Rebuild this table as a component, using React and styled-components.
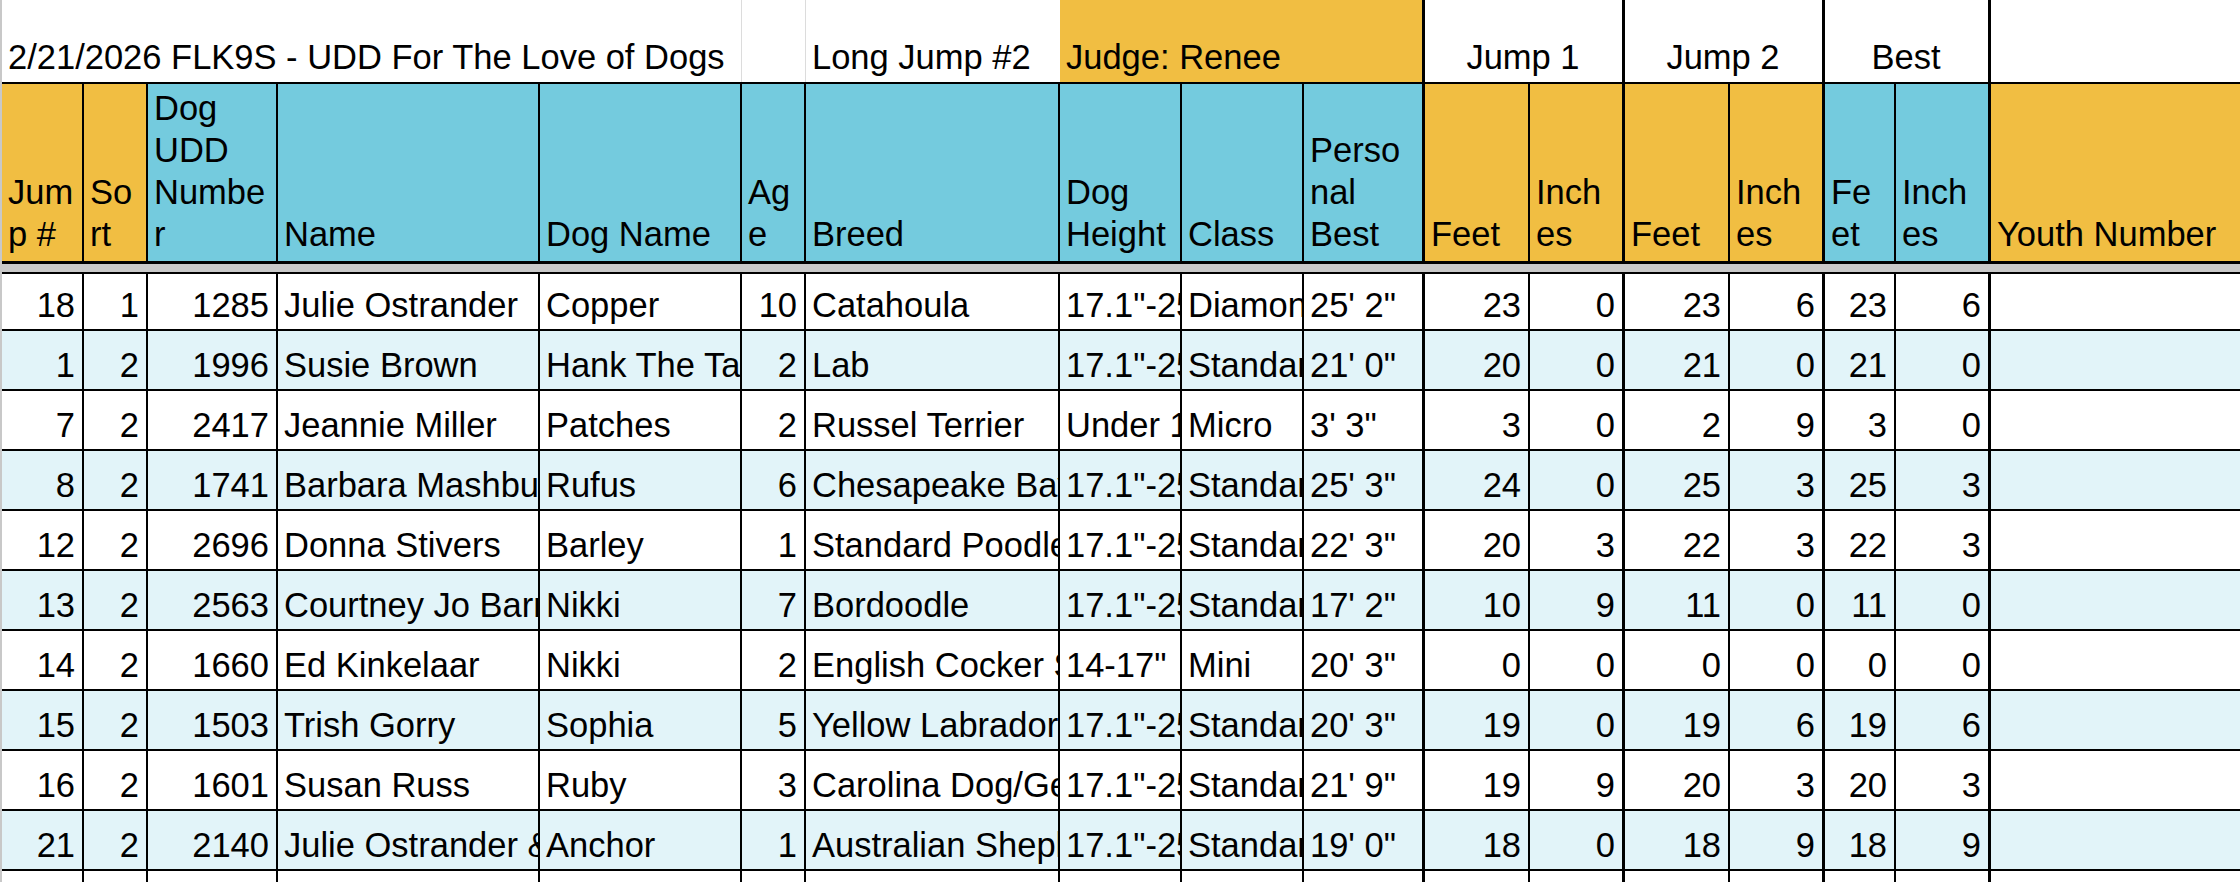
import React from "react";
import styled, { createGlobalStyle } from "styled-components";

const palette = {
  orange: "#f1be42",
  blue: "#74cbde",
  stripe: "#e2f4f9",
  white: "#ffffff",
  line: "#000000",
  faint: "#dcdcdc",
  freeze: "#c9c9c9",
};

const GlobalStyle = createGlobalStyle`
  html, body {
    margin: 0;
    padding: 0;
    background: #fff;
  }
  body {
    font-family: "Liberation Sans", Arial, sans-serif;
    overflow: hidden;
  }
`;

// column layout of the sheet, widths include the right grid line
const columns = [
  { key: "jump", label: "Jump #", w: 82, head: "orange", align: "right" },
  { key: "sort", label: "Sort", w: 64, head: "orange", align: "right" },
  { key: "udd", label: "Dog UDD Number", w: 130, head: "blue", align: "right" },
  { key: "name", label: "Name", w: 262, head: "blue" },
  { key: "dog", label: "Dog Name", w: 202, head: "blue" },
  { key: "age", label: "Age", w: 64, head: "blue", align: "right" },
  { key: "breed", label: "Breed", w: 254, head: "blue" },
  { key: "height", label: "Dog Height", w: 122, head: "blue" },
  { key: "cls", label: "Class", w: 122, head: "blue" },
  { key: "pb", label: "Personal Best", w: 121, head: "blue", thick: true },
  { key: "f1", label: "Feet", w: 105, head: "orange", align: "right" },
  { key: "i1", label: "Inches", w: 95, head: "orange", align: "right", thick: true },
  { key: "f2", label: "Feet", w: 105, head: "orange", align: "right" },
  { key: "i2", label: "Inches", w: 95, head: "orange", align: "right", thick: true },
  { key: "fb", label: "Feet", w: 71, head: "blue", align: "right" },
  { key: "ib", label: "Inches", w: 95, head: "blue", align: "right", thick: true },
  { key: "youth", label: "Youth Number", head: "orange", grow: true },
];

const H = '17.1"-25"';

const entries = [
  [18, 1, 1285, "Julie Ostrander", "Copper", 10, "Catahoula", H, "Diamond", `25' 2"`, 23, 0, 23, 6, 23, 6],
  [1, 2, 1996, "Susie Brown", "Hank The Tank", 2, "Lab", H, "Standard", `21' 0"`, 20, 0, 21, 0, 21, 0],
  [7, 2, 2417, "Jeannie Miller", "Patches", 2, "Russel Terrier", 'Under 14"', "Micro", `3' 3"`, 3, 0, 2, 9, 3, 0],
  [8, 2, 1741, "Barbara Mashburn", "Rufus", 6, "Chesapeake Bay Retriever", H, "Standard", `25' 3"`, 24, 0, 25, 3, 25, 3],
  [12, 2, 2696, "Donna Stivers", "Barley", 1, "Standard Poodle", H, "Standard", `22' 3"`, 20, 3, 22, 3, 22, 3],
  [13, 2, 2563, "Courtney Jo Barnes", "Nikki", 7, "Bordoodle", H, "Standard", `17' 2"`, 10, 9, 11, 0, 11, 0],
  [14, 2, 1660, "Ed Kinkelaar", "Nikki", 2, "English Cocker Spaniel", '14-17"', "Mini", `20' 3"`, 0, 0, 0, 0, 0, 0],
  [15, 2, 1503, "Trish Gorry", "Sophia", 5, "Yellow Labrador Retriever", H, "Standard", `20' 3"`, 19, 0, 19, 6, 19, 6],
  [16, 2, 1601, "Susan Russ", "Ruby", 3, "Carolina Dog/German Shepherd", H, "Standard", `21' 9"`, 19, 9, 20, 3, 20, 3],
  [21, 2, 2140, "Julie Ostrander & Bella", "Anchor", 1, "Australian Shepherd", H, "Standard", `19' 0"`, 18, 0, 18, 9, 18, 9],
  [],
];

const Sheet = styled.div`
  width: 2240px;
  box-sizing: border-box;
  border-left: 2px solid #c8c8c8;
  font-size: 34.5px;
  color: #000;
`;

const TitleRow = styled.div`
  display: flex;
  height: 84px;
  box-sizing: border-box;
  border-bottom: 2px solid ${palette.line};
`;

const TitleCell = styled.div`
  flex: ${(p) => (p.$w ? `0 0 ${p.$w}px` : "1 1 0")};
  box-sizing: border-box;
  display: flex;
  align-items: flex-end;
  justify-content: ${(p) => (p.$center ? "center" : "flex-start")};
  padding: 0 7px 4px 6px;
  line-height: 42px;
  white-space: nowrap;
  background: ${(p) => (p.$fill ? palette[p.$fill] : palette.white)};
  border-right: ${(p) =>
    p.$edge === "thick" ? `3px solid ${palette.line}` : p.$edge === "faint" ? `1px solid ${palette.faint}` : "none"};
`;

const HeadRow = styled.div`
  display: flex;
  height: 180px;
  box-sizing: border-box;
  border-bottom: 3px solid ${palette.line};
`;

const HeadCell = styled.div`
  flex: ${(p) => (p.$grow ? "1 1 0" : `0 0 ${p.$w}px`)};
  box-sizing: border-box;
  display: flex;
  flex-direction: column;
  justify-content: flex-end;
  padding: 0 7px 6px 6px;
  line-height: 42px;
  overflow-wrap: anywhere;
  background: ${(p) => palette[p.$fill]};
  border-right: ${(p) => (p.$thick ? 3 : 2)}px solid ${palette.line};
  &:last-child {
    border-right: none;
  }
`;

const FreezeBar = styled.div`
  height: 8px;
  background: ${palette.freeze};
`;

const Body = styled.div`
  border-top: 2px solid ${palette.line};
`;

const DataRow = styled.div`
  display: flex;
  height: ${(p) => p.$h}px;
  box-sizing: border-box;
  background: ${(p) => (p.$striped ? palette.stripe : palette.white)};
  border-bottom: 2px solid ${palette.line};
`;

const DataCell = styled.div`
  flex: ${(p) => (p.$grow ? "1 1 0" : `0 0 ${p.$w}px`)};
  box-sizing: border-box;
  display: flex;
  flex-direction: column;
  justify-content: flex-end;
  padding: 0 7px 3px 6px;
  line-height: 42px;
  white-space: nowrap;
  overflow: hidden;
  text-align: ${(p) => p.$align || "left"};
  border-right: ${(p) => (p.$thick ? 3 : 2)}px solid ${palette.line};
  &:last-child {
    border-right: none;
  }
`;

const App = () => {
  return (
    <>
      <GlobalStyle />
      <Sheet>
        <TitleRow>
          <TitleCell $w={740} $edge="faint">
            2/21/2026 FLK9S - UDD For The Love of Dogs
          </TitleCell>
          <TitleCell $w={64} $edge="faint" />
          <TitleCell $w={254}>Long Jump #2</TitleCell>
          <TitleCell $w={365} $fill="orange" $edge="thick">
            Judge: Renee
          </TitleCell>
          <TitleCell $w={200} $center $edge="thick">
            Jump 1
          </TitleCell>
          <TitleCell $w={200} $center $edge="thick">
            Jump 2
          </TitleCell>
          <TitleCell $w={166} $center $edge="thick">
            Best
          </TitleCell>
          <TitleCell />
        </TitleRow>

        <HeadRow>
          {columns.map((c) => (
            <HeadCell key={c.key} $w={c.w} $grow={c.grow} $thick={c.thick} $fill={c.head}>
              {c.label}
            </HeadCell>
          ))}
        </HeadRow>

        <FreezeBar />

        <Body>
          {entries.map((row, i) => (
            <DataRow key={i} $h={i === 0 ? 57 : 60} $striped={i % 2 === 1}>
              {columns.map((c, j) => (
                <DataCell key={c.key} $w={c.w} $grow={c.grow} $thick={c.thick} $align={c.align}>
                  {row[j]}
                </DataCell>
              ))}
            </DataRow>
          ))}
        </Body>
      </Sheet>
    </>
  );
};

export default App;
